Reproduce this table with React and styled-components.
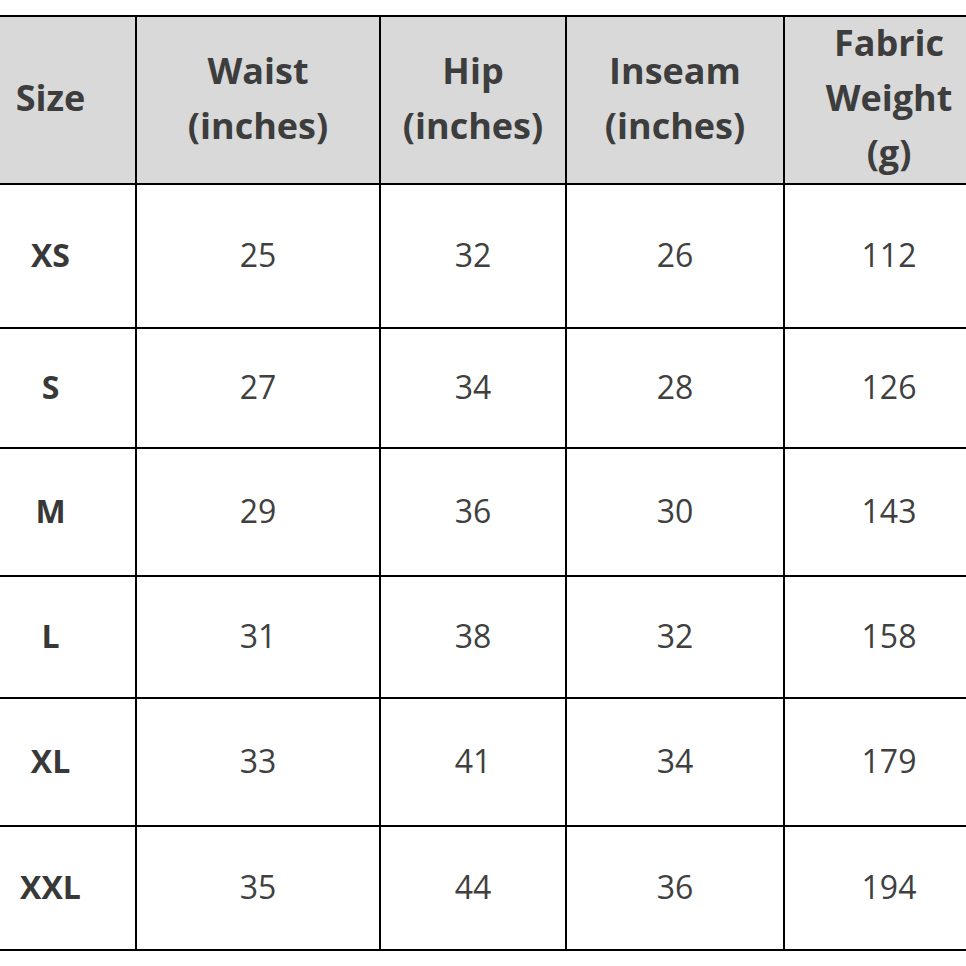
import React from "react";
import styled, { createGlobalStyle } from "styled-components";

const GlobalStyle = createGlobalStyle`
  html, body {
    margin: 0;
    padding: 0;
    background: #fff;
    overflow: hidden;
  }
  body {
    font-family: "Open Sans", "Noto Sans", "DejaVu Sans", sans-serif;
  }
`;

const headers = [
  ["Size"],
  ["Waist", "(inches)"],
  ["Hip", "(inches)"],
  ["Inseam", "(inches)"],
  ["Fabric", "Weight", "(g)"],
];

const rows = [
  { size: "XS", waist: 25, hip: 32, inseam: 26, weight: 112, h: 142 },
  { size: "S", waist: 27, hip: 34, inseam: 28, weight: 126, h: 118 },
  { size: "M", waist: 29, hip: 36, inseam: 30, weight: 143, h: 126 },
  { size: "L", waist: 31, hip: 38, inseam: 32, weight: 158, h: 120 },
  { size: "XL", waist: 33, hip: 41, inseam: 34, weight: 179, h: 126 },
  { size: "XXL", waist: 35, hip: 44, inseam: 36, weight: 194, h: 122 },
];

export default function App() {
  return (
    <>
      <GlobalStyle />
      <Page>
        <Viewport>
          <SizeTable
            style={{
              gridTemplateRows: `166px ${rows.map((r) => r.h + "px").join(" ")}`,
            }}
          >
            {headers.map((lines, i) => (
              <HeadCell key={i}>
                {lines.map((l) => (
                  <span key={l}>{l}</span>
                ))}
              </HeadCell>
            ))}
            {rows.map((row) => (
              <React.Fragment key={row.size}>
                <Cell bold>{row.size}</Cell>
                <Cell>{row.waist}</Cell>
                <Cell>{row.hip}</Cell>
                <Cell>{row.inseam}</Cell>
                <Cell>{row.weight}</Cell>
              </React.Fragment>
            ))}
          </SizeTable>
        </Viewport>
      </Page>
    </>
  );
}

const Page = styled.div`
  width: 966px;
  height: 966px;
  padding-top: 15px;
  box-sizing: border-box;
  background: #fff;
`;

const Viewport = styled.div`
  width: 966px;
  overflow: hidden;
`;

const SizeTable = styled.div`
  display: grid;
  grid-template-columns: 169px 242px 184px 216px 208px;
  gap: 2px;
  margin-left: -34px;
  width: max-content;
  background: #000;
  border-top: 2px solid #000;
  border-bottom: 2px solid #000;
`;

const HeadCell = styled.div`
  display: flex;
  flex-direction: column;
  align-items: center;
  justify-content: center;
  padding-bottom: 5px;
  background: #d9d9d9;
  color: #3d3d3d;
  font-size: 36px;
  font-weight: 700;
  line-height: 55px;
  text-align: center;
`;

const Cell = styled.div`
  display: flex;
  align-items: center;
  justify-content: center;
  padding-bottom: 4px;
  background: #fff;
  color: ${({ bold }) => (bold ? "#383838" : "#404040")};
  font-size: 32px;
  font-weight: ${({ bold }) => (bold ? 700 : 400)};
`;
